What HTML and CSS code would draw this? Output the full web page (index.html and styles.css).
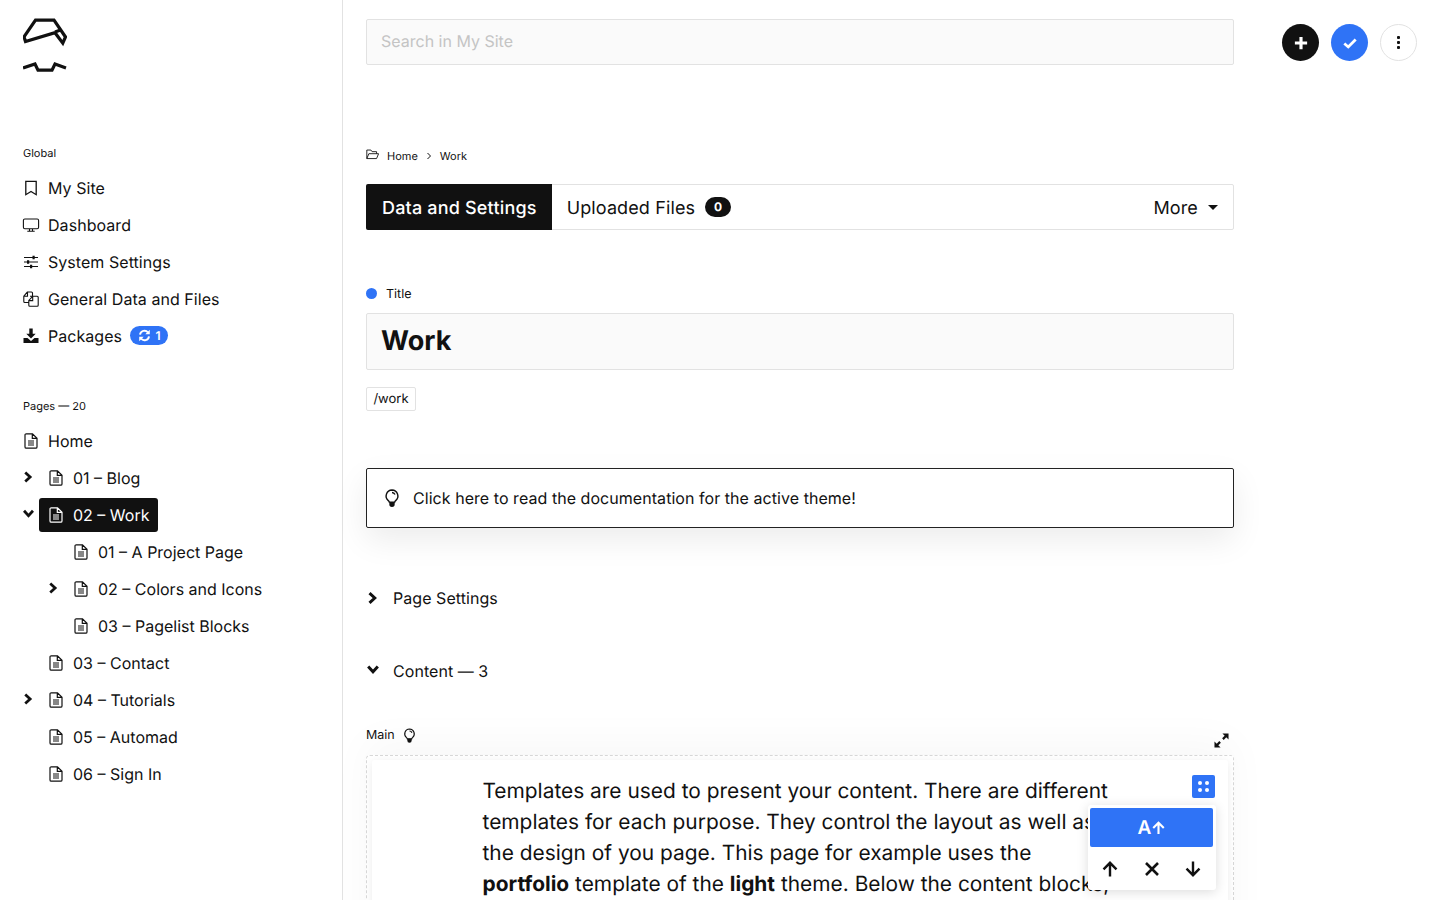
FILE: index.html
```html
<!DOCTYPE html>
<html lang="en">
<head>
<meta charset="utf-8">
<title>Work</title>
<link rel="stylesheet" href="styles.css">
</head>
<body>
<svg class="defs" width="0" height="0" aria-hidden="true">
  <symbol id="file" viewBox="0 0 16 16"><path d="M3.300 .8h6.200L14 5.200v8.700a1.300 1.300 0 0 1-1.300 1.300H3.300A1.300 1.300 0 0 1 2 13.900V2.100A1.300 1.300 0 0 1 3.300 .8zM9.300 .8v4.500H14M5 8h6M5 10h6M5 12h6" fill="none" stroke="currentColor" stroke-width="1.200"/></symbol>
  <symbol id="chev-r" viewBox="0 0 16 16"><path d="M4 2.500 10 8l-6 5.500" fill="none" stroke="currentColor" stroke-width="3.400"/></symbol>
  <symbol id="chev-d" viewBox="0 0 16 16"><path d="M2.500 4 8 10l5.500-6" fill="none" stroke="currentColor" stroke-width="3.400"/></symbol>
  <symbol id="bulb" viewBox="0 0 16 18"><path d="M8 1a6 6 0 0 1 3.700 10.600c-.6.600-.9 1-1 1.500H5.300c-.1-.5-.4-.9-1-1.500A6 6 0 0 1 8 1zM8 3.500a3.500 3.500 0 0 1 3 2" fill="none" stroke="currentColor" stroke-width="1.400"/><path d="M5.300 13h5.400v2.300a2.700 2.700 0 0 1-5.400 0z" fill="currentColor"/></symbol>
</svg>

<div class="app">
  <aside class="sidebar">
    <svg class="logo" viewBox="23 18 44 55" width="44" height="55" aria-label="Logo">
      <path d="M35.500 20.200H54L65.500 37l-2.700 6.200L55 32.700 25.500 41.500 24 36.800zM55 32l5.500-2" fill="none" stroke="#111" stroke-width="3.200"/>
      <path d="M23 68 35 64l3 6.200h14L55 64l11 4" fill="none" stroke="#111" stroke-width="3.200"/>
    </svg>

    <div class="side-label side-label-global">Global</div>
    <ul class="nav">
      <li class="nav-item"><svg class="ico" viewBox="0 0 16 16"><path d="M2.800 1.300h10.400v13.400L8 11.500l-5.200 3.200z" fill="none" stroke="currentColor" stroke-width="1.300"/></svg>My Site</li>
      <li class="nav-item"><svg class="ico ico-wide" viewBox="0 0 16 16"><path d="M1.800 2h12.400a1.400 1.400 0 0 1 1.400 1.400v6.900a1.400 1.400 0 0 1-1.400 1.400H1.800A1.400 1.400 0 0 1 .4 10.300V3.400A1.400 1.400 0 0 1 1.800 2zM6.500 11.700v2.300M9.500 11.700v2.300M4.300 14.300h7.400" fill="none" stroke="currentColor" stroke-width="1.100"/></svg>Dashboard</li>
      <li class="nav-item"><svg class="ico" viewBox="0 0 16 16"><path d="M1 3.500h14M1 8h14M1 12.500h14" fill="none" stroke="currentColor" stroke-width="1.200"/><path d="M9.500 1.800h2.200v3.400H9.500zM4 6.300h2.200v3.400H4zM7 10.800h2.200v3.400H7z" fill="currentColor"/></svg>System Settings</li>
      <li class="nav-item"><svg class="ico" viewBox="0 0 16 16"><path d="M5.500 11.500H1.800a1 1 0 0 1-1-1V5.300L4.300 1h4.200a1 1 0 0 1 1 1v2.800M7 5.300h7.200a1 1 0 0 1 1 1v8a1 1 0 0 1-1 1H6.800a1 1 0 0 1-1-1V9.500L9.700 5.300M4.500 1.200v4H.9M9.700 5.300v4.300H5.800" fill="none" stroke="currentColor" stroke-width="1.100"/></svg>General Data and Files</li>
      <li class="nav-item"><svg class="ico" viewBox="0 0 16 16"><path d="M6.300 .5h3.400v5.300h3L8 10.500 3.300 5.800h3zM.5 10h4L8 13l3.500-3h4v5H.5z" fill="currentColor"/></svg>Packages<span class="badge"><svg class="badge-ico" viewBox="0 0 16 16"><path d="M2.500 7a5.500 5.500 0 0 1 9.800-2.700M13.500 9a5.500 5.500 0 0 1-9.800 2.700" fill="none" stroke="#fff" stroke-width="2.400"/><path d="M14.500 1v5.500H9zM1.500 15V9.500H7z" fill="#fff"/></svg>1</span></li>
    </ul>

    <div class="side-label side-label-pages">Pages — 20</div>
    <ul class="nav">
      <li class="page"><span class="page-link"><svg class="ico"><use href="#file"/></svg>Home</span></li>
      <li class="page lvl-1"><svg class="tree-chev"><use href="#chev-r"/></svg><span class="page-link"><svg class="ico"><use href="#file"/></svg>01 – Blog</span></li>
      <li class="page lvl-1"><svg class="tree-chev"><use href="#chev-d"/></svg><span class="page-link is-active"><svg class="ico"><use href="#file"/></svg>02 – Work</span></li>
      <li class="page lvl-2"><span class="page-link"><svg class="ico"><use href="#file"/></svg>01 – A Project Page</span></li>
      <li class="page lvl-2"><svg class="tree-chev"><use href="#chev-r"/></svg><span class="page-link"><svg class="ico"><use href="#file"/></svg>02 – Colors and Icons</span></li>
      <li class="page lvl-2"><span class="page-link"><svg class="ico"><use href="#file"/></svg>03 – Pagelist Blocks</span></li>
      <li class="page lvl-1"><span class="page-link"><svg class="ico"><use href="#file"/></svg>03 – Contact</span></li>
      <li class="page lvl-1"><svg class="tree-chev"><use href="#chev-r"/></svg><span class="page-link"><svg class="ico"><use href="#file"/></svg>04 – Tutorials</span></li>
      <li class="page lvl-1"><span class="page-link"><svg class="ico"><use href="#file"/></svg>05 – Automad</span></li>
      <li class="page lvl-1"><span class="page-link"><svg class="ico"><use href="#file"/></svg>06 – Sign In</span></li>
    </ul>
  </aside>

  <main class="main">
    <div class="column">
      <div class="search">Search in My Site</div>

      <nav class="crumbs">
        <svg class="crumb-folder" viewBox="0 0 16 16"><path d="M1 13V2.500h5l1.500 2h5.500V7M1 13h12l2.500-6H3.500z" fill="none" stroke="currentColor" stroke-width="1.100"/></svg>
        <span>Home</span>
        <svg class="crumb-sep" viewBox="0 0 8 8"><path d="M2.500 1 5.500 4l-3 3" fill="none" stroke="currentColor" stroke-width="1"/></svg>
        <span>Work</span>
      </nav>

      <div class="tabs">
        <div class="tab tab-active">Data and Settings</div>
        <div class="tab">Uploaded Files<span class="count">0</span></div>
        <div class="tab tab-more">More<span class="caret"></span></div>
      </div>

      <div class="field-label"><span class="dot"></span>Title</div>
      <div class="title-input">Work</div>
      <div class="slug">/work</div>

      <div class="notice"><svg class="notice-ico"><use href="#bulb"/></svg>Click here to read the documentation for the active theme!</div>

      <div class="section section-settings"><svg class="section-chev"><use href="#chev-r"/></svg>Page Settings</div>
      <div class="section section-content"><svg class="section-chev"><use href="#chev-d"/></svg>Content — 3</div>

      <div class="editor-head">
        <span class="editor-label">Main<svg class="editor-bulb"><use href="#bulb"/></svg></span>
        <svg class="expand" viewBox="0 0 16 16"><path d="M3 13 6.500 9.500M9.500 6.500 13 3" stroke="#111" stroke-width="2.400"/><path d="M9 .5h6.500V7zM.5 9v6.500H7z" fill="#111"/></svg>
      </div>

      <div class="editor">
        <div class="block">
          <p class="block-text">Templates are used to present your content. There are different templates for each purpose. They control the layout as well as the design of you page. This page for example uses the <b>portfolio</b> template of the <b>light</b> theme. Below the content blocks, the template also displays a list of projects.</p>
          <span class="block-handle"><i></i><i></i><i></i><i></i></span>
          <div class="block-menu">
            <div class="menu-primary"><span class="menu-a">A</span><svg class="menu-a-arrow" viewBox="0 0 16 16"><path d="M8 15.500V2M1.500 8 8 1.500 14.500 8" fill="none" stroke="#fff" stroke-width="2.600"/></svg></div>
            <div class="menu-row">
              <svg class="menu-ico" viewBox="0 0 16 16"><path d="M8 15.500V2M1.500 8.300 8 1.800l6.500 6.500" fill="none" stroke="#111" stroke-width="2.400"/></svg>
              <svg class="menu-ico" viewBox="0 0 16 16"><path d="M2 2l12 12M14 2 2 14" fill="none" stroke="#111" stroke-width="2.600"/></svg>
              <svg class="menu-ico" viewBox="0 0 16 16"><path d="M8 .5V14M1.500 7.700 8 14.200l6.500-6.500" fill="none" stroke="#111" stroke-width="2.400"/></svg>
            </div>
          </div>
        </div>
      </div>
    </div>

    <div class="actions">
      <span class="circle circle-dark"><svg class="circle-ico" viewBox="0 0 16 16"><path d="M8 1v14M1 8h14" stroke="#fff" stroke-width="3.600"/></svg></span>
      <span class="circle circle-blue"><svg class="circle-ico" viewBox="0 0 16 16"><path d="M1.500 8.500 6 12.500 14.500 4" fill="none" stroke="#fff" stroke-width="3.200"/></svg></span>
      <span class="circle circle-light"><i></i><i></i><i></i></span>
    </div>
  </main>
</div>
</body>
</html>
```

FILE: styles.css
```css
* { box-sizing: border-box; }
html, body { height: 100%; margin: 0; overflow: hidden; }
body {
  font-family: Inter, "Liberation Sans", sans-serif;
  font-size: 16px;
  line-height: 20px;
  letter-spacing: .05px;
  color: #111;
  background: #fff;
  text-rendering: geometricPrecision;
}
.defs { position: absolute; }
.app { display: flex; height: 900px; overflow: hidden; }

/* sidebar */
.sidebar {
  width: 343px;
  flex: none;
  border-right: 1px solid #e2e2e2;
  padding: 18px 0 0 23px;
}
.logo { display: block; }
.side-label { font-size: 11px; line-height: 14px; letter-spacing: 0; }
.side-label-global { margin-top: 73px; margin-bottom: 9px; }
.side-label-pages { margin-top: 45px; margin-bottom: 9px; }
.nav { list-style: none; margin: 0; padding: 0; }
.nav-item { display: flex; align-items: center; height: 37px; }
.ico { width: 16px; height: 16px; flex: none; margin-right: 9px; }
.ico-wide { overflow: visible; }
.badge {
  display: inline-flex;
  align-items: center;
  justify-content: center;
  gap: 5px;
  height: 19px;
  width: 38px;
  margin-left: 8px;
  border-radius: 10px;
  background: #2f73f6;
  color: #fff;
  font-size: 12px;
  font-weight: 600;
}
.badge-ico { width: 13px; height: 13px; }

/* page tree */
.page { position: relative; display: flex; align-items: center; height: 37px; letter-spacing: 0; }
.page-link { display: inline-flex; align-items: center; height: 34px; padding: 0 8.500px 0 0; border-radius: 3px; }
.lvl-1 { padding-left: 16px; }
.lvl-1 .page-link { padding-left: 9px; }
.lvl-2 { padding-left: 41px; }
.lvl-2 .page-link { padding-left: 9px; }
.is-active { background: #111; color: #fff; }
.tree-chev { position: absolute; top: 10px; left: -1px; width: 13px; height: 16px; }
.lvl-2 .tree-chev { left: 24px; }

/* main */
.main { flex: 1; display: flex; align-items: flex-start; padding: 19px 23px 0; min-width: 0; }
.column { width: 868px; flex: none; }
.search {
  height: 46px;
  padding: 0 14px;
  line-height: 42px;
  background: #fafafa;
  border: 1px solid #e2e2e2;
  border-radius: 2px;
  color: #c4c4c4;
  letter-spacing: 0;
}
.crumbs { display: flex; align-items: center; height: 16px; margin-top: 83px; font-size: 11px; letter-spacing: 0; }
.crumb-folder { width: 13px; height: 13px; margin-right: 8px; margin-top: -4px; }
.crumb-sep { width: 8px; height: 8px; margin: 0 7px 0 7px; }
.tabs {
  display: flex;
  align-items: stretch;
  height: 46px;
  margin-top: 20px;
  border: 1px solid #e2e2e2;
  border-radius: 2px;
  font-size: 18px;
  letter-spacing: .12px;
}
.tab { display: flex; align-items: center; padding: 4px 15px 0; }
.tab-active { margin: -1px 0 -1px -1px; background: #111; color: #fff; border-radius: 2px 0 0 2px; padding: 4px 15px 0 16px; font-weight: 500; letter-spacing: .18px; }
.count {
  display: inline-flex;
  align-items: center;
  justify-content: center;
  width: 26px;
  height: 20px;
  margin: 0 0 4px 10px;
  border-radius: 10px;
  background: #111;
  color: #fff;
  font-size: 12px;
  font-weight: 700;
}
.tab-more { margin-left: auto; }
.caret {
  width: 0;
  height: 0;
  margin: 0 0 4px 10px;
  border: 5.5px solid transparent;
  border-top: 5.5px solid #111;
  border-bottom: 0;
}
.field-label { display: flex; align-items: center; height: 16px; margin-top: 55px; font-size: 12.500px; padding-top: 3px; letter-spacing: 0; }
.dot { width: 11px; height: 11px; margin: 0 9px 2px 0; border-radius: 50%; background: #2f73f6; }
.title-input {
  height: 57px;
  margin-top: 12px;
  padding: 0 14px;
  background: #fafafa;
  border: 1px solid #e2e2e2;
  border-radius: 2px;
  font-size: 27px;
  font-weight: 700;
  line-height: 54px;
}
.slug {
  width: 50px;
  height: 24px;
  margin-top: 17px;
  border: 1px solid #e2e2e2;
  border-radius: 2px;
  font-size: 13px;
  line-height: 22px;
  text-align: center;
  letter-spacing: 0;
}
.notice {
  display: flex;
  align-items: center;
  height: 60px;
  margin-top: 57px;
  padding: 0 18px 0 17px;
  border: 1px solid #222;
  border-radius: 2px;
  box-shadow: 0 12px 32px rgba(0, 0, 0, .08);
}
.notice-ico { width: 16px; height: 18px; margin-right: 13px; }
.section { display: flex; align-items: center; height: 20px; }
.section-settings { margin-top: 60px; }
.section-content { margin-top: 53px; }
.section-chev { width: 14px; height: 14px; margin-right: 13px; }
.section-content .section-chev { margin-bottom: 2px; }
.editor-head { display: flex; justify-content: space-between; height: 30px; margin-top: 44px; }
.editor-label { display: flex; align-items: center; height: 20px; font-size: 12.500px; padding-top: 1px; letter-spacing: 0; }
.editor-bulb { width: 13px; height: 15px; margin-left: 8px; }
.expand { width: 15px; height: 15px; margin: 8px 5px 0 0; }
.editor {
  height: 400px;
  padding: 4px 5px;
  border: 1px dashed #d8d8d8;
  border-radius: 4px;
  box-shadow: 0 -14px 40px rgba(0, 0, 0, .03);
}
.block {
  position: relative;
  height: 300px;
  padding: 16px 110px 0 110.500px;
  background: #fff;
  border-radius: 3px;
  box-shadow: 0 2px 10px rgba(0, 0, 0, .08);
}
.block-text { margin: 0; font-size: 20.900px; line-height: 31px; letter-spacing: 0; }
.block-text b { font-weight: 700; }
.block-handle {
  position: absolute;
  top: 15px;
  right: 13px;
  display: grid;
  grid-template-columns: 4px 4px;
  gap: 3px;
  place-content: center;
  width: 23px;
  height: 23px;
  border-radius: 2px;
  background: #2f73f6;
}
.block-handle i { width: 4px; height: 4px; border-radius: 50%; background: #fff; }
.block-menu {
  position: absolute;
  top: 45px;
  right: 12px;
  width: 128px;
  height: 85px;
  padding: 3px 3px 0 2px;
  background: #fff;
  border-radius: 3px;
  box-shadow: 0 2px 12px rgba(0, 0, 0, .14);
}
.menu-primary {
  display: flex;
  align-items: center;
  justify-content: center;
  gap: 1px;
  height: 39px;
  border-radius: 2px;
  background: #2f73f6;
  color: #fff;
  font-size: 19px;
  font-weight: 600;
}
.menu-a-arrow { width: 13px; height: 14px; }
.menu-row { display: flex; justify-content: space-between; padding: 14px 12px 0 12px; }
.menu-ico { width: 16px; height: 16px; }

/* top-right actions */
.actions { display: flex; gap: 12px; margin: 5px 0 0 48px; }
.circle { display: flex; flex-direction: column; align-items: center; justify-content: center; width: 37px; height: 37px; border-radius: 50%; }
.circle-dark { background: #111; }
.circle-blue { background: #2f73f6; }
.circle-light { gap: 1.500px; border: 1px solid #e2e2e2; }
.circle-light i { width: 3.500px; height: 3.500px; background: #111; border-radius: 1px; }
.circle-ico { width: 14px; height: 14px; }
```
